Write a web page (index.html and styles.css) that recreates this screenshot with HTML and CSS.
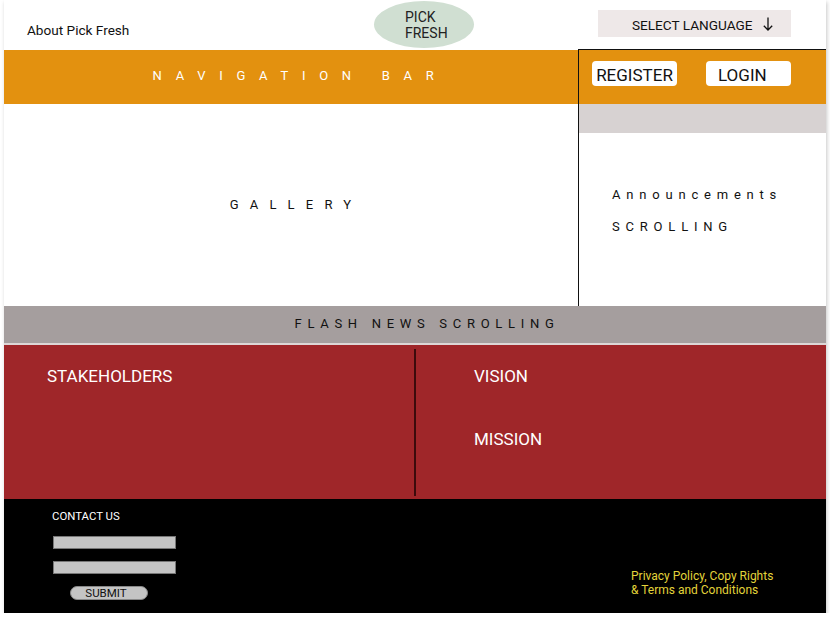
FILE: index.html
```html
<!DOCTYPE html>
<html>
<head>
<meta charset="utf-8">
<link rel="stylesheet" href="styles.css">
</head>
<body>
<div class="page">
  <header class="header">
    <div class="about">About Pick Fresh</div>
    <div class="logo"><span>PICK<br>FRESH</span></div>
    <div class="lang">SELECT LANGUAGE
      <svg class="arrow" width="10" height="14" viewBox="0 0 10 14"><path d="M5 0.5V13M0.8 8.8L5 13L9.2 8.8" fill="none" stroke="#111" stroke-width="1.3"/></svg>
    </div>
  </header>
  <section class="top">
    <div class="left-col">
      <div class="nav">NAVIGATION&nbsp;BAR</div>
      <div class="gallery">GALLERY</div>
    </div>
    <div class="right-col">
      <div class="auth">
        <button class="btn">REGISTER</button>
        <button class="btn btn-login">LOGIN</button>
      </div>
      <div class="strip"></div>
      <div class="announce">
        <div class="ann-line">Announcements</div>
        <div class="ann-line">SCROLLING</div>
      </div>
    </div>
  </section>
  <div class="flash">FLASH NEWS SCROLLING</div>
  <section class="info">
    <div class="stake"><div class="info-title">STAKEHOLDERS</div></div>
    <div class="divider"></div>
    <div class="vm">
      <div class="info-title">VISION</div>
      <div class="info-title mission">MISSION</div>
    </div>
  </section>
  <footer class="footer">
    <div class="contact">
      <div class="contact-title">CONTACT US</div>
      <div class="field"></div>
      <div class="field"></div>
      <button class="submit">SUBMIT</button>
    </div>
    <div class="legal">Privacy Policy, Copy Rights<br>&amp; Terms and Conditions</div>
  </footer>
</div>
</body>
</html>
```
FILE: styles.css
```css
* { box-sizing: border-box; }
body {
  margin: 0;
  background: #fff;
  font-family: Roboto, "Liberation Sans", sans-serif;
}
.page {
  width: 822px;
  margin-left: 4px;
  background: #fff;
  box-shadow: 1px 2px 4px rgba(0,0,0,0.22);
}
.header {
  height: 49px;
  display: flex;
  align-items: flex-start;
}
.about {
  width: 370px;
  padding: 22px 0 0 23px;
  font-size: 13.6px;
  line-height: 16px;
  color: #111;
}
.logo {
  width: 100px;
  height: 47px;
  margin-top: 1px;
  border-radius: 50%;
  background: #d0dfd2;
  padding: 8px 0 0 31px;
  font-size: 14px;
  line-height: 16px;
  color: #222;
}
.lang {
  margin: 10px 0 0 124px;
  width: 193px;
  height: 27px;
  background: #eee8e8;
  display: flex;
  align-items: center;
  padding: 2px 0 0 34px;
  font-size: 13.6px;
  color: #111;
}
.arrow { margin-left: 11px; margin-top: -1px; }
.top {
  display: flex;
  height: 257px;
}
.left-col {
  width: 574px;
  padding-top: 1px;
  display: flex;
  flex-direction: column;
}
.nav {
  height: 54px;
  background: #e3910f;
  color: #fff;
  font-size: 13px;
  letter-spacing: 13.7px;
  display: flex;
  align-items: center;
  justify-content: center;
  padding: 0 0 4px 18px;
}
.gallery {
  flex: 1;
  display: flex;
  align-items: center;
  justify-content: center;
  padding: 0 0 2px 10px;
  font-size: 13px;
  letter-spacing: 11.2px;
  color: #111;
}
.right-col {
  flex: 1;
  border-left: 1px solid #111;
  border-top: 1px solid #111;
  display: flex;
  flex-direction: column;
}
.auth {
  height: 54px;
  background: #e3910f;
  display: flex;
  align-items: flex-start;
  padding: 11px 0 0 13px;
  gap: 29px;
}
.btn {
  width: 85px;
  height: 25px;
  border: none;
  border-radius: 4px;
  background: #fff;
  font-family: Roboto, "Liberation Sans", sans-serif;
  font-size: 17px;
  color: #111;
  padding: 2px 0 0;
  text-align: center;
}
.btn:first-child { padding-left: 0; }
.btn-login { text-align: left; padding-left: 12px; }
.strip {
  height: 29px;
  background: #d7d2d2;
}
.announce {
  flex: 1;
  padding: 54px 0 0 33px;
}
.ann-line {
  font-size: 13px;
  line-height: 16px;
  letter-spacing: 5.8px;
  color: #111;
  margin-bottom: 16px;
}
.flash {
  height: 39px;
  background: #a59e9e;
  border-bottom: 2px solid #ddd6d6;
  display: flex;
  align-items: center;
  justify-content: center;
  padding: 0 0 2px 24px;
  font-size: 13px;
  letter-spacing: 5.7px;
  color: #111;
}
.info {
  height: 154px;
  background: #9f2629;
  display: flex;
}
.stake {
  width: 410px;
  padding: 21px 0 0 43px;
}
.divider {
  width: 2px;
  margin: 4px 0 3px;
  background: #3c0b0c;
}
.vm {
  flex: 1;
  padding: 21px 0 0 58px;
}
.info-title {
  font-size: 17px;
  line-height: 20px;
  color: #fff;
}
.mission { margin-top: 43px; }
.footer {
  height: 114px;
  background: #000;
  display: flex;
  justify-content: space-between;
}
.contact {
  padding: 10px 0 0 48px;
  display: flex;
  flex-direction: column;
  align-items: flex-start;
}
.contact-title {
  font-size: 11.4px;
  line-height: 14px;
  color: #fff;
  margin-bottom: 13px;
}
.field {
  width: 123px;
  height: 13px;
  background: #c4c4c4;
  border: 1px solid #777;
  margin: 0 0 12px 1px;
}
.submit {
  width: 78px;
  height: 14px;
  margin: 0 0 0 18px;
  padding: 0 6px 0 0;
  border: 1px solid #888;
  border-radius: 7px;
  background: #c4c4c4;
  font-family: Roboto, "Liberation Sans", sans-serif;
  font-size: 11.5px;
  line-height: 12px;
  color: #111;
}
.legal {
  align-self: flex-end;
  margin: 0 52px 16px 0;
  width: 143px;
  font-size: 12px;
  line-height: 14px;
  color: #e3d43a;
  white-space: nowrap;
}
```
